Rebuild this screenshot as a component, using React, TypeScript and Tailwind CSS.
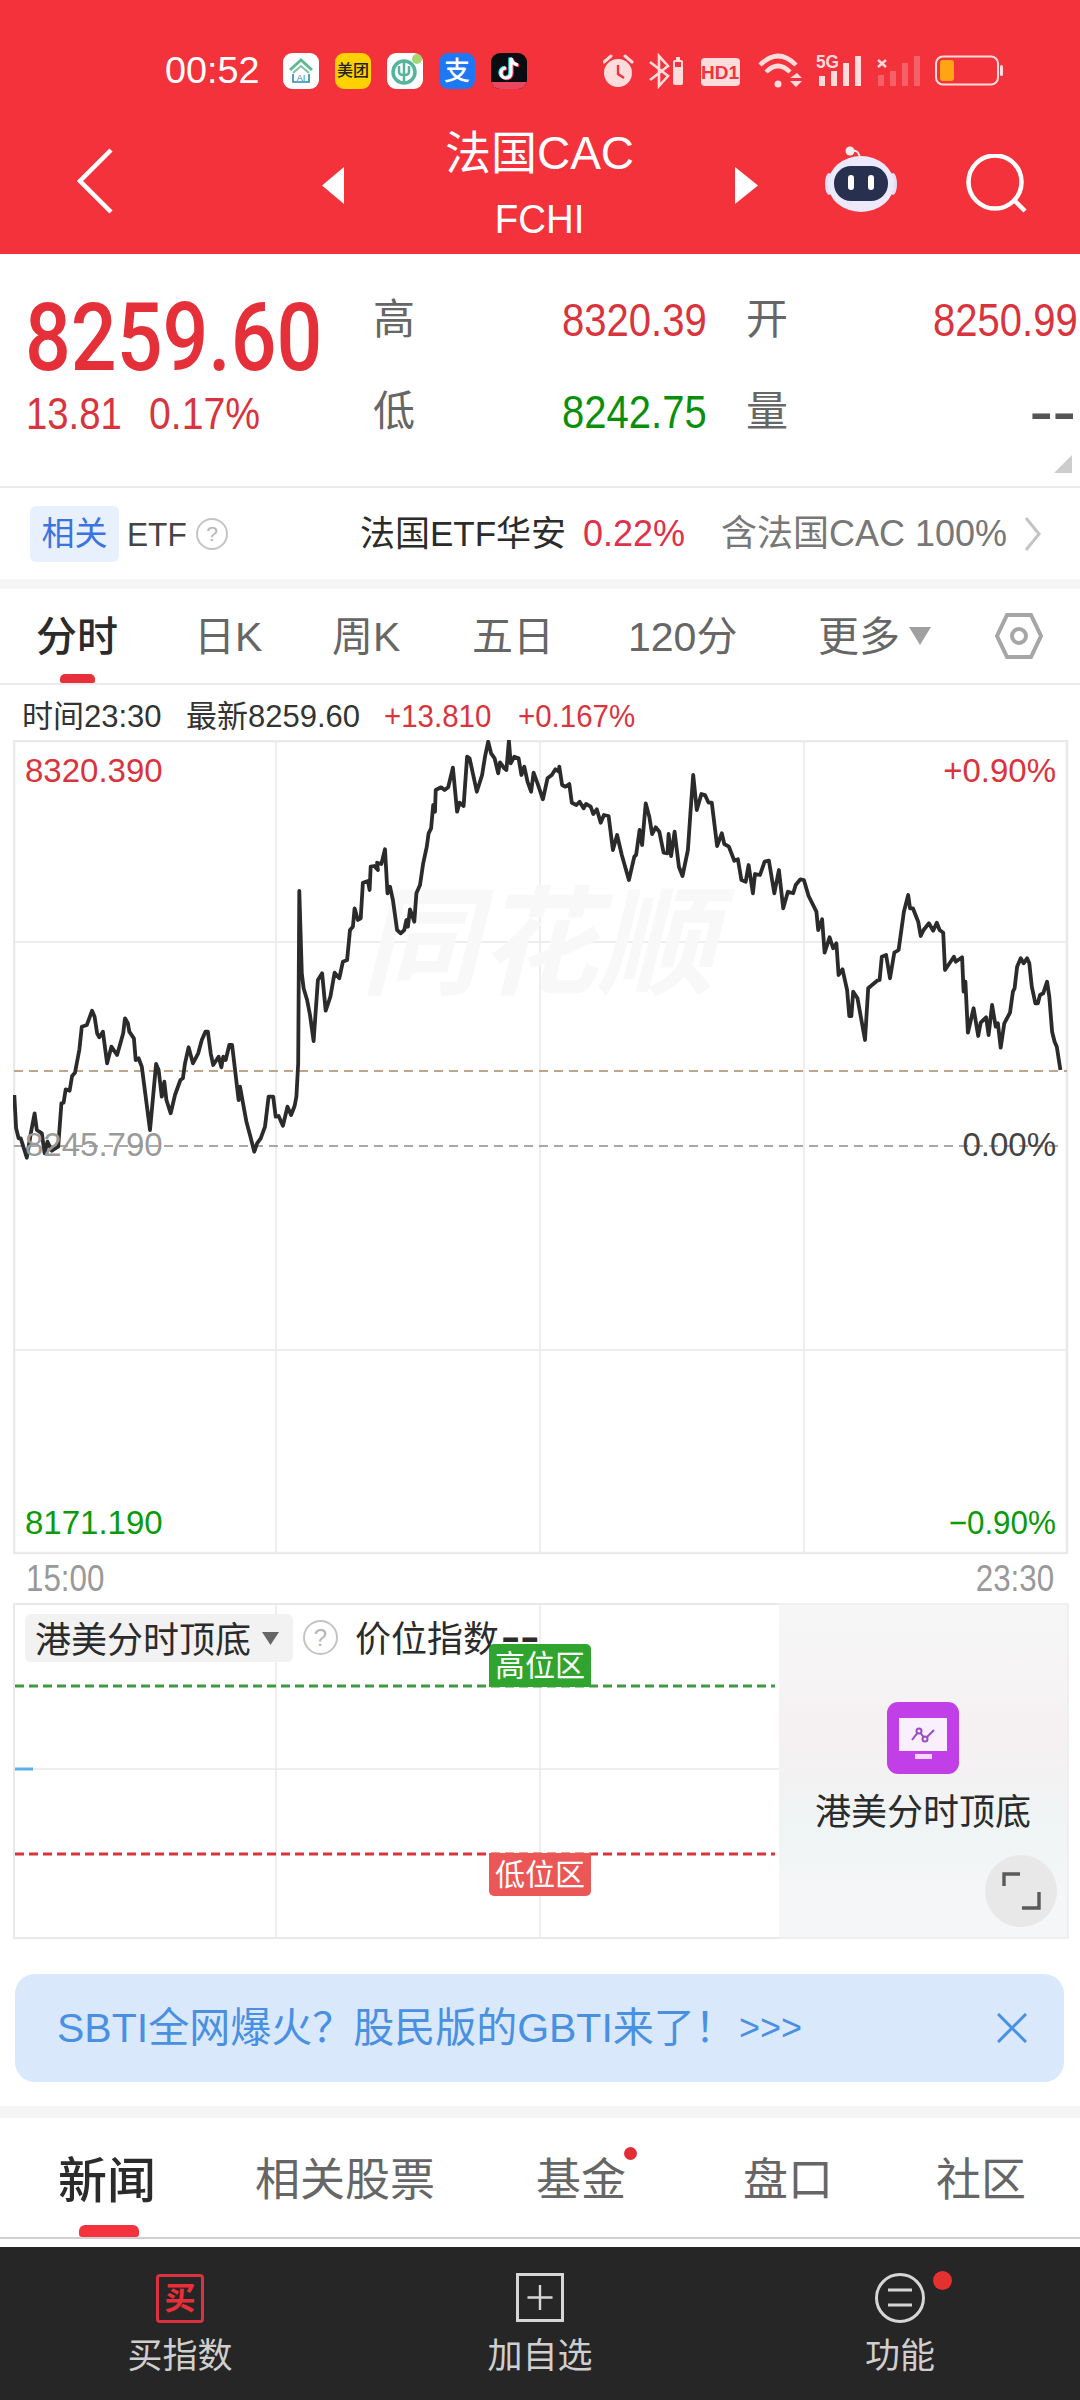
const narrowL = 'inline-block origin-left scale-x-[0.87] whitespace-nowrap'
const narrowR = 'inline-block origin-right scale-x-[0.87] whitespace-nowrap'

// price line, traced from the chart: [x, y] in crop units (x/2.8, y/3)
const leftPts = [
  [40,1095],[45,1195],[52,1225],[58,1225],[75,1283],[88,1200],[97,1150],[103,1200],[110,1205],[117,1210],[125,1270],[133,1235],[145,1262],[163,1250],[172,1120],[178,1118],[184,1078],[195,1082],[202,1038],[210,1028],[222,960],[229,890],[243,885],[258,842],[265,860],[272,910],[278,922],[288,905],[300,1000],[312,950],[328,975],[345,910],[350,865],[358,880],[362,905],[375,925],[380,990],[388,985],[397,1010],[420,1200],[437,1002],[444,1020],[453,1100],[460,1055],[466,1110],[478,1150],[490,1095],[505,1050],[512,1045],[518,1000],[528,952],[540,1000],[555,970],[565,930],[575,905],[582,905],[590,970],[597,1005],[612,980],[620,1012],[625,980],[632,990],[642,945],[650,945],[668,1110],[672,1070],[680,1118],[690,1175],[700,1215],[712,1265],[720,1240],[730,1225],[742,1190],[752,1100],[765,1100],[772,1160],[780,1158],[792,1187],[805,1130],[815,1155],[825,1128],[830,1100],[835,1000],[838,483],[845,730],[850,775],[860,810],[868,855],[878,933],[890,750],[902,730],[912,842],[925,800],[937,728],[950,745],[960,695],[972,690],[980,600],[988,590],[993,535],[1002,570],[1010,565],[1016,458],[1030,453],[1035,480],[1038,410],[1048,408],[1058,420],[1056,398],[1068,402],[1078,358],[1085,490],[1092,470],[1100,510],[1112,600],[1122,610],[1132,600],[1138,570],[1142,590],[1148,538],[1160,575],[1166,490],[1176,465],[1185,400],[1195,350],[1200,310],[1207,295],[1213,225],[1218,245],[1220,180],[1235,172],[1245,180],[1255,172],[1268,113],[1280,245],[1287,218],[1298,228],[1308,80],[1315,85],[1335,185],[1350,135],[1358,80],[1367,35],[1375,70],[1385,85],[1395,130],[1400,97],[1412,115],[1418,120],[1425,32],[1430,100],[1440,80],[1452,85],[1460,135],[1468,110],[1477,155],[1487,185],[1494,128],[1505,160],[1520,208],[1533,145],[1545,135],[1555,118],[1565,125],
]
const rightPts = [
  [110,110],[118,165],[127,170],[138,162],[145,218],[158,225],[167,215],[178,235],[185,222],[198,230],[205,252],[215,238],[226,278],[235,255],[248,258],[260,360],[272,315],[285,375],[305,450],[320,380],[325,375],[335,300],[342,345],[352,220],[362,260],[370,312],[380,292],[390,305],[402,368],[413,370],[416,312],[423,378],[433,305],[445,410],[455,438],[470,360],[477,250],[485,135],[495,240],[508,192],[518,195],[528,218],[537,218],[552,348],[565,310],[572,342],[585,350],[600,392],[610,388],[620,450],[632,455],[640,405],[652,490],[658,432],[672,435],[685,395],[697,392],[712,490],[725,420],[737,535],[750,485],[765,490],[772,465],[785,448],[795,450],[808,498],[830,545],[835,600],[846,568],[853,668],[867,622],[877,655],[886,640],[892,735],[903,718],[916,780],[922,858],[928,858],[933,785],[945,805],[966,930],[975,775],[1000,752],[1007,750],[1013,680],[1025,675],[1036,745],[1048,668],[1060,660],[1075,545],[1087,495],[1092,535],[1100,535],[1115,575],[1122,618],[1130,600],[1145,580],[1157,602],[1167,578],[1175,600],[1185,608],[1190,720],[1215,680],[1220,695],[1238,682],[1242,785],[1247,755],[1254,908],[1270,835],[1283,918],[1290,878],[1305,862],[1312,915],[1322,825],[1332,890],[1338,880],[1346,953],[1356,880],[1372,848],[1380,785],[1385,775],[1392,710],[1402,685],[1410,700],[1420,685],[1426,700],[1433,770],[1443,820],[1450,820],[1456,795],[1465,790],[1476,755],[1482,800],[1490,905],[1497,935],[1503,950],[1513,1020],
]
const linePoints = [
  ...leftPts.map(([x, y]) => `${(x / 2.8).toFixed(1)},${(y / 3 + 730).toFixed(1)}`),
  ...rightPts.map(([x, y]) => `${(x / 2.8 + 520).toFixed(1)},${(y / 3 + 730).toFixed(1)}`),
].join(' ')

function AppIcons() {
  return (
    <div className="ml-[23px] flex gap-[16px]">
      <div className="w-[36px] h-[36px] rounded-[9px] bg-white">
        <svg viewBox="0 0 36 36" className="w-full h-full">
          <path d="M7 17 L18 7 L29 17" fill="none" stroke="#5fb98f" strokeWidth="3" />
          <path d="M10 20 L18 13 L26 20" fill="none" stroke="#7cc3a4" strokeWidth="2" />
          <path d="M10 21 V29 H26 V21" fill="none" stroke="#2e86b8" strokeWidth="1.6" />
          <text x="18" y="27.5" textAnchor="middle" fontSize="9" fill="#2e86b8" fontFamily="Liberation Sans">AI</text>
        </svg>
      </div>
      <div className="w-[36px] h-[36px] rounded-[9px] bg-[#FFD100] flex items-center justify-center text-[16px] leading-none text-[#222] font-medium whitespace-nowrap">美团</div>
      <div className="w-[36px] h-[36px] rounded-[9px] bg-white relative">
        <svg viewBox="0 0 36 36" className="w-full h-full">
          <circle cx="17" cy="19" r="11" fill="none" stroke="#55b59c" strokeWidth="3.5" />
          <path d="M17 9 V30 M12 13 V19 Q12 22 17 22 Q22 22 22 19 V13" fill="none" stroke="#55b59c" strokeWidth="2.5" />
          <circle cx="30" cy="6" r="5" fill="#a6d672" />
        </svg>
      </div>
      <div className="w-[36px] h-[36px] rounded-[9px] bg-[#1E78F5] flex items-center justify-center text-[26px] leading-none text-white font-medium">支</div>
      <div className="w-[36px] h-[36px] rounded-[9px] bg-[#0b0b12] relative overflow-hidden">
        <svg viewBox="0 0 36 36" className="w-full h-full">
          <path d="M20 5 V20 A5 5 0 1 1 15 15 M20 5 Q21 11 27 12" fill="none" stroke="#25f4ee" strokeWidth="3.4" transform="translate(-1 -0.6)" />
          <path d="M20 5 V20 A5 5 0 1 1 15 15 M20 5 Q21 11 27 12" fill="none" stroke="#fe2c55" strokeWidth="3.4" transform="translate(1 0.6)" />
          <path d="M20 5 V20 A5 5 0 1 1 15 15 M20 5 Q21 11 27 12" fill="none" stroke="#fff" strokeWidth="3.2" />
          <rect x="0" y="29" width="36" height="7" fill="#e8475d" />
        </svg>
      </div>
    </div>
  )
}

function StatusIcons() {
  return (
    <div className="ml-[76px] h-[36px]">
      <svg width="402" height="36" viewBox="603 53 402 36" fill="#FFDCDC">
        {/* alarm */}
        <circle cx="618" cy="73" r="14" />
        <path d="M618 65 V74 L624 78" fill="none" stroke="#F3323B" strokeWidth="2.4" />
        <path d="M604 62 L611 56 M632 62 L625 56" stroke="#FFDCDC" strokeWidth="3" strokeLinecap="round" />
        {/* bluetooth + mini battery */}
        <path d="M650 62 L668 76 L659 86 V56 L668 66 L650 80" fill="none" stroke="#FFDCDC" strokeWidth="2.6" />
        <rect x="673" y="60" width="10" height="25" rx="2" />
        <rect x="676" y="57" width="4" height="3" />
        <rect x="675" y="62" width="6" height="5" fill="#F3323B" />
        {/* HD1 */}
        <rect x="701" y="58" width="39" height="28" rx="4" />
        <text x="720" y="79" textAnchor="middle" fontSize="19" fontWeight="700" fill="#F3323B" fontFamily="Liberation Sans">HD1</text>
        {/* wifi */}
        <path d="M760 65 Q778 47 796 65" fill="none" stroke="#FFDCDC" strokeWidth="4.5" />
        <path d="M766 72 Q778 60 790 72" fill="none" stroke="#FFDCDC" strokeWidth="4.5" />
        <circle cx="778" cy="84" r="3.5" />
        <path d="M790 78 L797 73 L802 78 Z M790 81 H802 L796 87 Z" />
        {/* 5G signal */}
        <text x="816" y="68" fontSize="18" fontWeight="700" fontFamily="Liberation Sans" textLength="23" lengthAdjust="spacingAndGlyphs">5G</text>
        <rect x="819" y="76" width="6" height="10" />
        <rect x="831" y="71" width="6" height="15" />
        <rect x="843" y="63" width="6" height="23" />
        <rect x="855" y="56" width="6" height="30" />
        {/* no-service signal */}
        <path d="M878 60 L886 67 M886 60 L878 67" stroke="#FFDCDC" strokeWidth="2.4" />
        <g opacity="0.28">
          <rect x="878" y="75" width="6" height="11" />
          <rect x="890" y="71" width="6" height="15" />
          <rect x="902" y="63" width="6" height="23" />
          <rect x="914" y="56" width="6" height="30" />
        </g>
        {/* battery */}
        <rect x="936" y="56.5" width="62" height="28" rx="7" fill="none" stroke="#FFDCDC" strokeWidth="2" />
        <rect x="940" y="60" width="14" height="21" rx="3" fill="#FFA514" />
        <rect x="1000" y="65" width="3" height="11" rx="1.5" />
      </svg>
    </div>
  )
}

function Robot() {
  return (
    <svg width="72" height="66" viewBox="0 0 72 66">
      <path d="M26 6 Q33 2 35 12" fill="none" stroke="#eee" strokeWidth="2" />
      <circle cx="25" cy="5" r="4.5" fill="#eee" />
      <ellipse cx="4" cy="38" rx="4" ry="11" fill="#dfe0f5" />
      <ellipse cx="68" cy="38" rx="4" ry="11" fill="#dfe0f5" />
      <ellipse cx="36" cy="38" rx="33" ry="28" fill="#eceafa" />
      <rect x="9" y="20" width="54" height="35" rx="17" fill="#27304f" />
      <rect x="23" y="29" width="6" height="15" rx="3" fill="#fff" />
      <rect x="43" y="29" width="6" height="15" rx="3" fill="#fff" />
    </svg>
  )
}

function Header() {
  return (
    <div className="h-[254px] bg-[#F3323B] text-white flex flex-col">
      <div className="pt-[53px] flex items-center">
        <span className="ml-[165px] w-[95px] text-[36px] leading-[36px] whitespace-nowrap">
          <span className="inline-block origin-left scale-x-[1.05]">00:52</span>
        </span>
        <AppIcons />
        <StatusIcons />
      </div>
      <div className="mt-[44px] flex items-start">
        <svg className="ml-[77px] mt-[15px]" width="36" height="66" viewBox="0 0 36 66">
          <path d="M34 2 L3 33 L34 64" fill="none" stroke="#fff" strokeWidth="4.5" />
        </svg>
        <svg className="ml-[209px] mt-[34px]" width="22" height="37" viewBox="0 0 22 37"><path d="M22 0 V37 L0 18.5 Z" fill="#fff" /></svg>
        <div className="w-[391px] flex flex-col items-center">
          <div className="text-[46px] leading-[46px] mt-[-3px]">法国CAC</div>
          <div className="text-[40px] leading-[40px] mt-[23px]">
            <span className="inline-block scale-x-[0.96]">FCHI</span>
          </div>
        </div>
        <svg className="mt-[34px]" width="23" height="37" viewBox="0 0 23 37"><path d="M0 0 V37 L23 18.5 Z" fill="#fff" /></svg>
        <div className="ml-[67px] mt-[13px]"><Robot /></div>
        <svg className="ml-[69px] mt-[21px]" width="62" height="60" viewBox="0 0 62 60">
          <circle cx="29" cy="28" r="26.5" fill="none" stroke="#fff" strokeWidth="4.5" />
          <path d="M49 47 L59 57" stroke="#fff" strokeWidth="4.5" />
        </svg>
      </div>
    </div>
  )
}

function Quote() {
  return (
    <div className="h-[234px] bg-white border-b-2 border-[#EBEBEB] relative flex">
      <div className="w-[373px] pl-[25px] pt-[38px]">
        <div className="text-[94px] leading-[92px] font-['Roboto'] font-medium text-[#E5303A]">
          <span className="inline-block origin-left scale-x-[0.858]">8259.60</span>
        </div>
        <div className="mt-[8px] flex text-[44px] leading-[44px] text-[#D9343E]">
          <span className="w-[124px] pl-[1px]"><span className="inline-block origin-left scale-x-[0.87]">13.81</span></span>
          <span><span className="inline-block origin-left scale-x-[0.89]">0.17%</span></span>
        </div>
      </div>
      <div className="pt-[20px] grid grid-cols-[189px_184px_187px_147px] grid-rows-[92px_92px] items-center text-[42px] leading-[46px] text-[#666]">
        <span>高</span>
        <span className="text-[46px] text-[#D9343E]"><span className={narrowL}>8320.39</span></span>
        <span>开</span>
        <span className="text-[46px] text-[#D9343E]"><span className={narrowL}>8250.99</span></span>
        <span>低</span>
        <span className="text-[46px] text-[#0A8F0A]"><span className={narrowL}>8242.75</span></span>
        <span>量</span>
        <span className="text-right pr-[4px] text-[46px] font-bold text-[#555]">
          <span className="inline-block origin-right scale-x-[1.5]">--</span>
        </span>
      </div>
      <svg className="absolute left-[1054px] top-[201px]" width="18" height="18" viewBox="0 0 18 18">
        <path d="M18 0 V18 H0 Z" fill="#CDCDCD" />
      </svg>
    </div>
  )
}

function EtfRow() {
  return (
    <div className="h-[91px] bg-white flex items-center text-[34px] leading-[40px] whitespace-nowrap">
      <div className="ml-[30px] w-[89px] h-[56px] rounded-[6px] bg-[#E8F0FD] text-[#3B73E0] flex items-center justify-center text-[33px]">相关</div>
      <span className="ml-[8px] w-[69px] text-[#444]"><span className="inline-block origin-left scale-x-[0.93]">ETF</span></span>
      <span className="w-[32px] h-[32px] rounded-full border-2 border-[#C4C4C4] text-[#B5B5B5] text-[21px] leading-[28px] text-center">?</span>
      <span className="ml-[132px] w-[223px] text-[35px] text-[#2b2b2b]">法国ETF华安</span>
      <span className="w-[138px] text-[36px] text-[#E0304A]">0.22%</span>
      <span className="text-[#777] w-[303px] text-[36px]">含法国CAC 100%</span>
      <svg width="18" height="34" viewBox="0 0 18 34"><path d="M2 1 L15 17 L2 33" fill="none" stroke="#C4C4C4" strokeWidth="3" /></svg>
    </div>
  )
}

function ChartTabs() {
  return (
    <div className="h-[96px] bg-white border-b-2 border-[#EBEBEB] flex items-start pt-[28px] text-[41px] leading-[40px] text-[#666] relative whitespace-nowrap">
      <span className="ml-[36px] w-[158px] text-[#2b2b2b] font-medium">分时</span>
      <span className="w-[138px]">日K</span>
      <span className="w-[140px]">周K</span>
      <span className="w-[156px]">五日</span>
      <span className="w-[190px]">120分</span>
      <span className="w-[91px]">更多</span>
      <svg className="mt-[10px]" width="22" height="18" viewBox="0 0 22 18"><path d="M0 0 H22 L11 18 Z" fill="#A0A0A0" /></svg>
      <svg className="ml-[64px] mt-[-4px]" width="48" height="46" viewBox="0 0 48 46">
        <path d="M12 2 H36 L46 23 L36 44 H12 L2 23 Z" fill="none" stroke="#A6A6A6" strokeWidth="4" />
        <circle cx="24" cy="23" r="7" fill="none" stroke="#A6A6A6" strokeWidth="4" />
      </svg>
      <div className="absolute left-[60px] bottom-0 w-[35px] h-[9px] rounded-t-[5px] rounded-b-[2px] bg-[#E8303A]" />
    </div>
  )
}

function PriceChart() {
  return (
    <div className="ml-[13px] w-[1056px] h-[815px] relative">
      <svg width="1056" height="815" viewBox="13 740 1056 815" className="block">
        <g stroke="#E9E9E9" strokeWidth="1.5" fill="none">
          <rect x="14" y="741" width="1053" height="812" strokeWidth="2.5" />
          <path d="M276 740 V1553 M540 740 V1553 M804 740 V1553 M14 942 H1067 M14 1350 H1067" />
        </g>
        <path d="M14 1071 H1067" stroke="#BFA589" strokeWidth="2" strokeDasharray="9 6" />
        <path d="M14 1146 H1061" stroke="#A8A8A8" strokeWidth="2" strokeDasharray="9 6" />
        <text x="538" y="985" textAnchor="middle" fontSize="118" fontWeight="700" fontStyle="italic" fill="#F8F8F8" fontFamily="Noto Sans CJK SC">同花顺</text>
        <polyline points={linePoints} fill="none" stroke="#2B2B2B" strokeWidth="3.8" strokeLinejoin="round" />
      </svg>
      <span className="absolute left-[12px] top-[11px] text-[33px] leading-[40px] text-[#D9343E]">8320.390</span>
      <span className="absolute left-[12px] top-[385px] text-[33px] leading-[40px] text-[#9A9A9A]">8245.790</span>
      <span className="absolute left-[12px] top-[763px] text-[33px] leading-[40px] text-[#0A9A0A]">8171.190</span>
      <span className="absolute right-[13px] top-[11px] text-[33px] leading-[40px] text-[#D9343E]">+0.90%</span>
      <span className="absolute right-[13px] top-[385px] text-[33px] leading-[40px] text-[#444]">0.00%</span>
      <span className="absolute right-[13px] top-[763px] text-[33px] leading-[40px] text-[#0A9A0A]">
        <span className="inline-block origin-right scale-x-[0.95]">−0.90%</span>
      </span>
    </div>
  )
}

function IndicatorChart() {
  return (
    <div className="ml-[13px] w-[1056px] h-[336px] flex">
      <div className="w-[766px] h-full relative border-y-2 border-l-2 border-[#E9E9E9]">
        <svg width="764" height="332" viewBox="15 1605 764 332" className="block">
          <path d="M276 1605 V1937 M540 1605 V1937 M15 1769 H780" stroke="#E9E9E9" strokeWidth="1.5" />
          <path d="M15 1686 H775" stroke="#3E9A3E" strokeWidth="3" strokeDasharray="9 5" />
          <path d="M15 1854 H775" stroke="#D9343E" strokeWidth="3" strokeDasharray="9 5" />
          <path d="M15 1769 H33" stroke="#5AB0E8" strokeWidth="3" />
        </svg>
        <div className="absolute left-[10px] top-[9px] w-[268px] h-[48px] rounded-[6px] bg-[#F2F2F2] flex items-center pl-[10px] pt-[5px] text-[36px] leading-[40px] text-[#2b2b2b] whitespace-nowrap">
          港美分时顶底
          <svg className="ml-[11px] mt-[-5px]" width="17" height="13" viewBox="0 0 17 13"><path d="M0 0 H17 L8.5 13 Z" fill="#666" /></svg>
        </div>
        <div className="absolute left-[288px] top-[15px] w-[35px] h-[35px] rounded-full border-2 border-[#C4C4C4] text-[#B5B5B5] text-[24px] leading-[31px] text-center">?</div>
        <div className="absolute left-[340px] top-[15px] text-[36px] leading-[40px] text-[#2b2b2b] whitespace-nowrap">
          价位指数<span className="inline-block origin-left scale-x-[1.6] font-bold ml-[2px] -translate-y-[3px]">--</span>
        </div>
        <div className="absolute left-[474px] top-[39px] w-[102px] h-[43px] rounded-t-[5px] bg-[#2FA52F] text-white text-[30px] leading-[43px] text-center">高位区</div>
        <div className="absolute left-[474px] top-[248px] w-[102px] h-[43px] rounded-b-[5px] bg-[#EB5757] text-white text-[30px] leading-[43px] text-center">低位区</div>
      </div>
      <div className="w-[290px] h-full relative border-y-2 border-r-2 border-[#EFEFEF] bg-[linear-gradient(180deg,#F6F6F7_0%,#F6F4F5_22%,#F5F0F1_38%,#F3F2F2_52%,#EFF4F5_66%,#F5F6F7_88%)] flex flex-col items-center">
        <div className="mt-[97px] w-[72px] h-[72px] rounded-[11px] bg-[#C13FE6]">
          <svg width="72" height="72" viewBox="0 0 72 72">
            <rect x="12" y="16" width="48" height="33" fill="#FAEFFC" />
            <rect x="28" y="52" width="17" height="5" fill="#F3D9FA" />
            <path d="M25 38 L32 29 L38 37 L47 28" fill="none" stroke="#9A4BC0" strokeWidth="2" />
            <circle cx="32" cy="29" r="2.5" fill="#FAEFFC" stroke="#9A4BC0" strokeWidth="2" />
            <circle cx="38" cy="37" r="2.5" fill="#FAEFFC" stroke="#9A4BC0" strokeWidth="2" />
          </svg>
        </div>
        <div className="mt-[19px] text-[36px] leading-[40px] text-[#2b2b2b] whitespace-nowrap">港美分时顶底</div>
        <div className="absolute left-[206px] top-[250px] w-[72px] h-[72px] rounded-full bg-[#E8E8E8]">
          <svg width="72" height="72" viewBox="0 0 72 72">
            <path d="M19 31 V19 H35" fill="none" stroke="#5A5A5A" strokeWidth="3.4" />
            <path d="M54 37 V53 H37" fill="none" stroke="#5A5A5A" strokeWidth="3.4" />
          </svg>
        </div>
      </div>
    </div>
  )
}

function Banner() {
  return (
    <div className="mt-[35px] ml-[15px] w-[1049px] h-[108px] rounded-[20px] bg-[#D9E8FB] flex items-center text-[#4A90E2] text-[41px] leading-[48px] whitespace-nowrap">
      <span className="ml-[42px] w-[682px]">SBTI全网爆火？股民版的GBTI来了！</span>
      <span className="w-[258px] text-[36px]">{'>>>'}</span>
      <svg width="30" height="30" viewBox="0 0 30 30"><path d="M1 1 L29 29 M29 1 L1 29" stroke="#4A90E2" strokeWidth="3" /></svg>
    </div>
  )
}

function NewsTabs() {
  return (
    <div className="h-[121px] bg-white border-b-2 border-[#CFCFCF] relative flex items-start pt-[39px] text-[45px] leading-[48px] text-[#666] whitespace-nowrap">
      <span className="ml-[58px] w-[197px] text-[49px] text-[#2b2b2b] font-medium">新闻</span>
      <span className="w-[281px]">相关股票</span>
      <span className="w-[207px] relative">
        基金
        <i className="absolute left-[88px] top-[-10px] w-[13px] h-[13px] rounded-full bg-[#E02E36]" />
      </span>
      <span className="w-[193px]">盘口</span>
      <span>社区</span>
      <div className="absolute left-[79px] bottom-0 w-[60px] h-[12px] rounded-t-[6px] rounded-b-[3px] bg-[#F5333F]" />
    </div>
  )
}

function BottomBar() {
  return (
    <div className="mt-[8px] h-[153px] bg-[#262626] grid grid-cols-3 text-[35px] leading-[40px] text-[#CFCFCF]">
      <div className="flex flex-col items-center pt-[27px]">
        <div className="w-[48px] h-[49px] rounded-[4px] border-[3px] border-[#DD3040] text-[#E8303A] text-[31px] leading-[43px] text-center font-bold">买</div>
        <span className="mt-[13px]">买指数</span>
      </div>
      <div className="flex flex-col items-center pt-[26px]">
        <svg width="48" height="49" viewBox="0 0 48 49">
          <rect x="1.5" y="1.5" width="45" height="46" fill="none" stroke="#D6D6D6" strokeWidth="3" />
          <path d="M24 12 V37 M11.5 24.5 H36.5" stroke="#D6D6D6" strokeWidth="2.4" />
        </svg>
        <span className="mt-[14px]">加自选</span>
      </div>
      <div className="flex flex-col items-center pt-[25px] relative">
        <svg width="50" height="52" viewBox="0 0 50 52">
          <circle cx="25" cy="26" r="23.5" fill="none" stroke="#D6D6D6" strokeWidth="3" />
          <path d="M13 18 H37 M13 33 H37" stroke="#D6D6D6" strokeWidth="3" />
        </svg>
        <span className="mt-[12px]">功能</span>
        <i className="absolute left-[213px] top-[24px] w-[19px] h-[19px] rounded-full bg-[#E53030]" />
      </div>
    </div>
  )
}

export default function App() {
  return (
    <div className="w-[1080px] h-[2400px] overflow-hidden bg-white font-['Liberation_Sans','Noto_Sans_CJK_SC',sans-serif]">
      <Header />
      <Quote />
      <EtfRow />
      <div className="h-[10px] bg-[#F5F5F5]" />
      <ChartTabs />
      <div className="h-[55px] pt-[8px] flex items-center text-[31px] leading-[40px] text-[#333] whitespace-nowrap">
        <span className="ml-[22px] w-[164px]">时间23:30</span>
        <span className="w-[198px]">最新8259.60</span>
        <span className="w-[134px] text-[#D9343E]"><span className="inline-block origin-left scale-x-[0.95]">+13.810</span></span>
        <span className="text-[#D9343E]"><span className="inline-block origin-left scale-x-[0.95]">+0.167%</span></span>
      </div>
      <PriceChart />
      <div className="h-[48px] flex items-center justify-between pl-[26px] pr-[26px] text-[36px] leading-[40px] text-[#999]">
        <span className={narrowL}>15:00</span>
        <span className={narrowR}>23:30</span>
      </div>
      <IndicatorChart />
      <Banner />
      <div className="mt-[24px] h-[12px] bg-[#F5F5F5]" />
      <NewsTabs />
      <BottomBar />
    </div>
  )
}
